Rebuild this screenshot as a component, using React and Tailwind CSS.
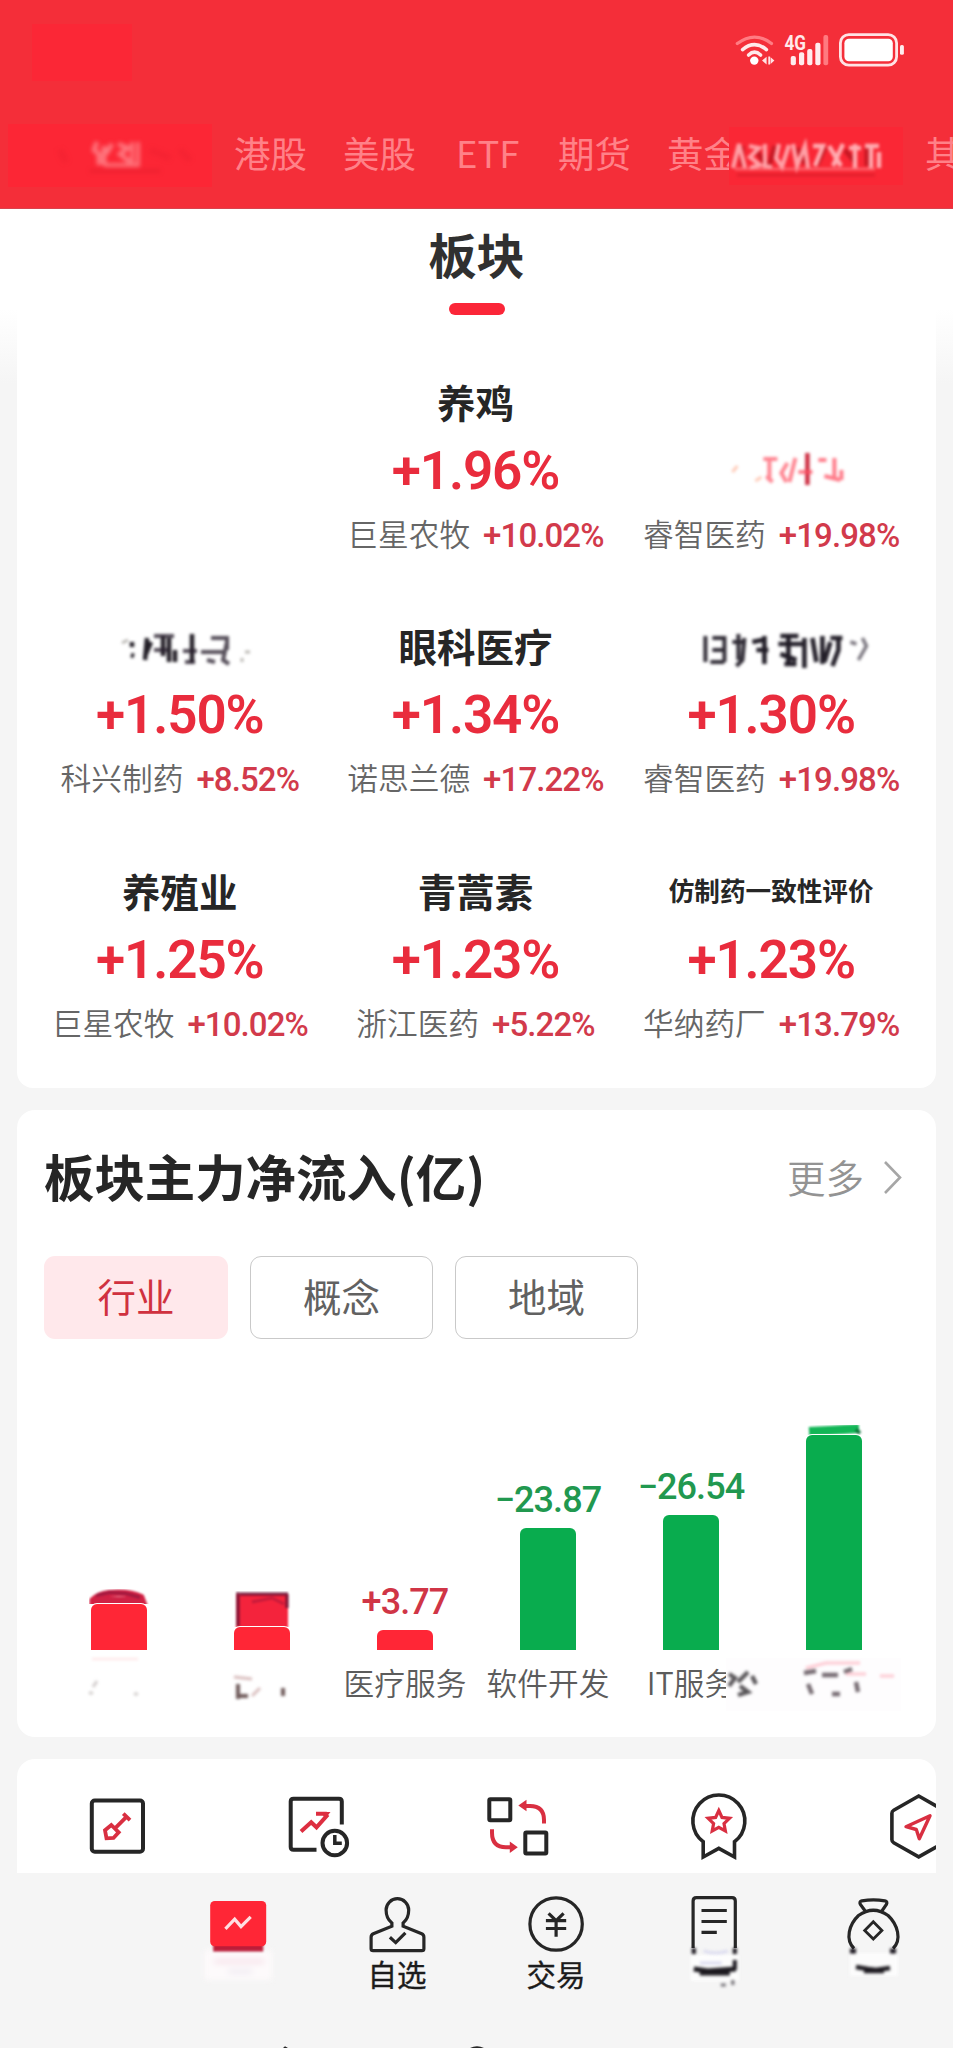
import React from 'react';

const CJK = "font-['Noto_Sans_CJK_SC',sans-serif]";
const NUM = "font-['Roboto','Noto_Sans_CJK_SC',sans-serif]";

/* Soft, unreadable patch: a tinted plate with a few blurred strokes on it. */
function Smudge({ box, plate, strokes = [], soft = 1.2, className = '' }) {
  const [x, y, w, h] = box;
  return (
    <svg width={w} height={h} viewBox={`${x} ${y} ${w} ${h}`} className={`block shrink-0 overflow-hidden ${className}`}>
      {plate && <rect x={x} y={y} width={w} height={h} fill={plate} />}
      <g style={{ filter: `blur(${soft}px)` }} fill="none">
        {strokes.map(([d, color, width, opacity], i) => (
          <path key={i} d={d} stroke={color} strokeWidth={width} opacity={opacity ?? 1} />
        ))}
      </g>
    </svg>
  );
}

function StatusIcons() {
  return (
    <svg width="180" height="44" viewBox="730 28 180 44" className="block" fill="none">
      <g stroke="#fff" strokeWidth="3.6" strokeLinecap="round">
        <path d="M737.3 43.6Q754.5 30.5 771.5 43.6" stroke="#ff7c83" strokeWidth="3.2" />
        <path d="M742.6 49.6Q754.5 39.8 766.4 49.6" stroke="#ffe9ea" />
        <path d="M748.6 55Q754.5 49.4 760.6 55" stroke="#ffe9ea" />
      </g>
      <circle cx="754.3" cy="60.6" r="4.2" fill="#fff" />
      <path d="M762 60.6l4.6-3.8v7.6zM768.3 56.6h1.8v8h-1.8zM774.4 60.6l-3.8-3.4v6.8z" fill="#ffe3e5" />
      <text x="784.4" y="50.2" fontFamily="Roboto" fontWeight="700" fontSize="19.5" textLength="21.5" lengthAdjust="spacingAndGlyphs" fill="#ffe9ea">4G</text>
      <g fill="#ffecee">
        <rect x="790.7" y="56" width="5.2" height="9.2" rx="2" />
        <rect x="799" y="52.3" width="5.2" height="12.9" rx="2" />
        <rect x="807.2" y="49" width="5.2" height="16.2" rx="2" />
        <rect x="815.3" y="42.7" width="5.2" height="22.5" rx="2" />
        <rect x="823.4" y="35" width="4.8" height="30.2" rx="2" fill="#ff7a80" />
      </g>
      <rect x="840.4" y="34.6" width="56.2" height="30.6" rx="8.5" stroke="#ffe3e5" strokeWidth="2.8" />
      <rect x="844.4" y="38.7" width="48.4" height="22.6" rx="4.5" fill="#fff" />
      <rect x="900" y="45" width="3.9" height="9.8" rx="1.6" fill="#ffecee" />
    </svg>
  );
}

function MarketTab({ children, className }) {
  return <span className={`shrink-0 pb-[5px] whitespace-nowrap text-[36.5px] leading-[44px] text-[#ff8188] ${className}`}>{children}</span>;
}

function Header() {
  return (
    <header className="flex h-[209px] flex-col overflow-hidden border-b border-[#d9434e] bg-[#f42e39]">
      <div className="flex h-[124px] items-start justify-between pt-6 pr-[43px] pl-8">
        <div className="h-[57px] w-[100px] bg-[#fb2736]" />
        <div className="pt-1"><StatusIcons /></div>
      </div>
      <div className="flex h-[63px] items-center pl-2">
        <Smudge
          box={[8, 124, 204, 63]}
          plate="#fc2635"
          soft={2.2}
          strokes={[
            ['M97 142l-3 8 5 4v11M104 146v19M112 144l-6 10M118 144l10 4-8 6 10 8', '#ff8d93', 4.5, 0.8],
            ['M132 142v24M138 142v24M104 165h36', '#ff8d93', 4, 0.7],
            ['M60 150l6 12M150 150l20 8M180 150l10 10', '#ef1f2f', 6, 0.5],
            ['M90 171h70', '#e31c2b', 3, 0.6],
          ]}
        />
        <MarketTab className="ml-[22px] w-[73px]">港股</MarketTab>
        <MarketTab className="ml-9 w-[73px]">美股</MarketTab>
        <MarketTab className="ml-10 w-[67px]">ETF</MarketTab>
        <MarketTab className="ml-[35px] w-[73px]">期货</MarketTab>
        <MarketTab className="ml-9 w-[73px]">黄金</MarketTab>
        <Smudge
          box={[730, 125, 174, 58]}
          className="-ml-[11px]"
          plate="#fa2735"
          soft={1.8}
          strokes={[
            ['M743 144v20M757 148l8 12M776 144l-6 20M798 146l8 16M826 145l-8 18M846 148l10 12M868 146v18', '#b9141f', 5, 0.8],
            ['M734 166l6-24 6 24M750 144l10 2-9 9 10 8-10 3M766 142v22l7 1M780 142l-3 14 6 9 7-22M794 142l4 22 8-20 3 22', '#ffa0a6', 4.2, 1],
            ['M814 144l10 0-8 20M830 144l12 20M844 142l-10 22M850 146h12M856 142v24M866 144h14M872 144v22M880 150v16', '#ffacb1', 4.4, 1],
            ['M736 167h140', '#ff8189', 2.5, 0.7],
            ['M738 173h138', '#cf1826', 3, 0.5],
          ]}
        />
        <MarketTab className="ml-[22px] w-[73px]">其他</MarketTab>
      </div>
    </header>
  );
}

const sectors = [
  { lead: null },
  { name: '养鸡', pct: '+1.96%', lead: '巨星农牧', leadPct: '+10.02%' },
  {
    smudgedPct: [
      ['M763 459h14M769 459v22M766 476l6 6M787 463l-6 10 5 9M795 458l-6 24', '#ff5c6c', 4, 0.75],
      ['M807 453v32', '#c8142b', 4.5, 0.9],
      ['M798 472h14M818 460h8M834 458v20M824 476l16 4M841 470v10', '#ff4f62', 4, 0.75],
      ['M732 472l5-6M755 481l6-4', '#ffb59a', 3, 0.7],
    ],
    lead: '睿智医药',
    leadPct: '+19.98%',
  },
  {
    smudgedName: [
      ['M133 640v5M132 653l3 1M148 636l-2 22M152 640l-6 14M164 634v20M170 636v24M176 648v12M193 632v29', '#17131b', 4.5, 0.95],
      ['M155 634h20M155 648h14M184 649h14M186 660h10M202 650h22M212 636h16v12M228 640l-4 18 6 4M208 658l8 2', '#2a2230', 4, 0.8],
      ['M243 656v4M123 641l6-3M246 650h5', '#8e8a84', 3, 0.6],
    ],
    pct: '+1.50%', lead: '科兴制药', leadPct: '+8.52%',
  },
  { name: '眼科医疗', pct: '+1.34%', lead: '诺思兰德', leadPct: '+17.22%' },
  {
    smudgedName: [
      ['M705 634v26M712 636h12v24M712 648h12M710 660h14M738 632v26M744 636l-2 22-6 6M732 640h12', '#1a1520', 4, 0.9],
      ['M752 640l10-2M764 634v28M756 648h12M780 634h18M778 642h24M788 634v28M780 652l16 6M784 662h12', '#15111b', 4.6, 0.95],
      ['M804 636v30M812 636l4 24M822 634v28M830 640l-6 20M838 634v14l-6 16M830 636h12', '#17131d', 4.6, 0.95],
      ['M850 640l6 2M862 636l4 8-8 14', '#4b4652', 3.5, 0.75],
    ],
    pct: '+1.30%', lead: '睿智医药', leadPct: '+19.98%',
  },
  { name: '养殖业', pct: '+1.25%', lead: '巨星农牧', leadPct: '+10.02%' },
  { name: '青蒿素', pct: '+1.23%', lead: '浙江医药', leadPct: '+5.22%' },
  { name: '仿制药一致性评价', compact: true, pct: '+1.23%', lead: '华纳药厂', leadPct: '+13.79%' },
];

function SectorCell({ item, index }) {
  const col = index % 3;
  const left = 33 + col * 295.3;
  return (
    <div className="flex h-[244.6px] flex-col items-center pt-10">
      <div className="flex h-12 items-center justify-center">
        {item.name && (
          <span className={`relative -top-[3px] font-bold leading-none whitespace-nowrap text-[#262626] ${item.compact ? 'text-[25.6px]' : 'text-[38.5px]'}`}>{item.name}</span>
        )}
        {item.smudgedName && <Smudge box={[left, 623, 295, 48]} strokes={item.smudgedName} soft={1.5} />}
      </div>
      <div className="mt-[16px] flex h-[54px] items-center justify-center">
        {item.pct && <span className={`${NUM} text-[53px] leading-none font-semibold tracking-[-1.1px] text-[#e92c3d]`}>{item.pct}</span>}
        {item.smudgedPct && <Smudge box={[left, 444, 295, 54]} strokes={item.smudgedPct} soft={1.8} />}
      </div>
      <div className="mt-[18px] flex h-[38px] items-center justify-center gap-[13px] whitespace-nowrap">
        {item.lead && <span className="relative -top-[2px] text-[30.7px] leading-none font-[350] text-[#666]">{item.lead}</span>}
        {item.leadPct && <span className={`${NUM} text-[33px] leading-none font-medium tracking-[-0.9px] text-[#d23a4b]`}>{item.leadPct}</span>}
      </div>
    </div>
  );
}

function SectorCard() {
  return (
    <section className="mx-[17px] h-[879px] overflow-hidden rounded-b-2xl bg-white">
      <div className="flex h-[131px] flex-col items-center pt-[18px]">
        <h1 className="text-[48px] leading-[52px] font-bold text-[#303030]">板块</h1>
        <div className="mt-[24px] h-3 w-[56px] rounded-full bg-[#fb2638]" />
      </div>
      <div className="grid grid-cols-3 pr-[17px] pl-[15px]">
        {sectors.map((item, i) => <SectorCell key={i} item={item} index={i} />)}
      </div>
    </section>
  );
}

const bars = [
  {
    height: 46, up: true, capHeight: 15,
    cap: [['M93 1600q6-6 16-7q20-2 32 4l3 8H93z', '#d31f42', 7, 1], ['M95 1600h48', '#cf2144', 7, 1], ['M96 1595l14-3 16 1 14 4', '#7e1740', 3, 0.6]],
    smear: [['M97 1677l-4 6M89 1689h4M134 1690h4', '#a39a98', 3, 0.5], ['M92 1655h46', '#ffd9dc', 2, 0.7]],
  },
  {
    height: 22.5, up: true, capHeight: 36,
    cap: [['M236 1611H288', '#f4233c', 34, 1], ['M238 1592v34M240 1594h48M287 1594v14', '#6d1234', 3.5, 0.8], ['M252 1602l20-4 12 6', '#b3183a', 3, 0.7]],
    smear: [['M238 1680v15M240 1692h8M283 1684v8', '#4a2f30', 4, 0.8], ['M252 1692l8-8M234 1673l18 2', '#c9a3a3', 3, 0.7]],
  },
  { height: 19.5, up: true, value: '+3.77', label: '医疗服务' },
  { height: 121.5, up: false, value: '−23.87', label: '软件开发' },
  { height: 135, up: false, value: '−26.54', label: 'IT服务' },
  {
    height: 215, up: false, capHeight: 10,
    cap: [['M809 1431l20-1 30-2', '#12b656', 9, 1], ['M856 1429l4 4', '#0b6b35', 4, 0.8]],
  },
];

function Bar({ bar, index }) {
  const center = 119 + index * 143;
  const top = 1649.5 - bar.height;
  return (
    <div className="flex h-[330px] w-[143px] flex-col items-center justify-end">
      {bar.value && (
        <span className={`${NUM} mb-[9px] text-[36px] leading-[38px] font-medium tracking-[-0.9px] whitespace-nowrap ${bar.up ? 'text-[#d03546]' : 'text-[#21984f]'}`}>
          {bar.value}
        </span>
      )}
      {bar.cap && <Smudge box={[center - 30, top - bar.capHeight, 60, bar.capHeight]} strokes={bar.cap} soft={1.2} />}
      <div
        className={`w-[56px] rounded-t-[6px] ring-1 ring-white ${bar.up ? 'bg-[#ff2636]' : 'bg-[#09ac4e]'}`}
        style={{ height: bar.height }}
      />
      <div className="flex h-[68px] w-full items-center justify-center pt-[2px]">
        {bar.label && <span className="relative -top-[2px] text-[30.7px] leading-none font-[350] whitespace-nowrap text-[#5c5c5c]">{bar.label}</span>}
        {bar.smear && <Smudge box={[center - 45, 1651, 90, 60]} strokes={bar.smear} soft={1.6} />}
      </div>
    </div>
  );
}

function FlowCard() {
  return (
    <section className="mx-[17px] mt-[22px] h-[627px] rounded-[18px] bg-white">
      <div className="flex h-[136px] items-center justify-between pr-[33px] pl-[27px]">
        <h2 className="pb-[3px] text-[50.4px] leading-none font-bold whitespace-nowrap text-[#262626]">板块主力净流入(亿)</h2>
        <div className="flex items-center gap-[19px]">
          <span className="pb-[3px] text-[38.5px] leading-none font-[350] text-[#939393]">更多</span>
          <svg width="20" height="36" viewBox="0 0 20 36" fill="none" stroke="#a6a6a6" strokeWidth="2.6"><path d="M2 2l15 15.500L2 33" /></svg>
        </div>
      </div>
      <div className="mt-[10px] flex gap-[22px] pl-[27px]">
        <button className="h-[83px] w-[184px] rounded-[11px] bg-[#ffe8eb] pb-[5px] text-[38.5px] leading-none text-[#d0313f]">行业</button>
        <button className="h-[83px] w-[183px] rounded-[11px] border border-[#c9c9c9] pb-[5px] text-[38.5px] leading-none text-[#616161]">概念</button>
        <button className="h-[83px] w-[183px] rounded-[11px] border border-[#c9c9c9] pb-[5px] text-[38.5px] leading-none text-[#616161]">地域</button>
      </div>
      <div className="relative mt-[48.500px] flex pl-[30.500px]">
        {bars.map((bar, i) => <Bar key={i} bar={bar} index={i} />)}
        {/* soft patch lying over the end of the last two labels */}
        <Smudge
          box={[726, 1658, 175, 53]}
          className="absolute right-[35px] bottom-[7px]"
          plate="#fefdfe"
          soft={1.8}
          strokes={[
            ['M729 1674l6 4-6 8M738 1682l10-10M740 1686l8 6-10 3M752 1676l4 8', '#2e2a2e', 4.2, 0.8],
            ['M804 1673l12-2M822 1675h16M844 1672l8-3M808 1684l4 10M856 1682l2 10M832 1694h8', '#3a2c34', 4.4, 0.7],
            ['M806 1668l20-5 34 0M846 1674h20M880 1676h14', '#ffb3c0', 3, 0.7],
          ]}
        />
      </div>
    </section>
  );
}

function ToolIcon({ x, children }) {
  return (
    <svg width="200.500" height="114" viewBox={`${x} 1759 200.500 114`} className="block shrink-0" fill="none" stroke="#262626" strokeWidth="4">
      {children}
    </svg>
  );
}

function ToolsCard() {
  return (
    <section className="mx-[17px] mt-[22px] flex h-[114px] overflow-hidden rounded-t-[18px] bg-white">
      <ToolIcon x={17}>
        <rect x="91.800" y="1800.600" width="51.200" height="51.200" rx="3" />
        <path d="M105 1830.300l6.300-5.300 7.400 7.300-5.200 5.700-7 .3zM115 1828.300l11.700-11.600M123.300 1813.600l6.700 6.600" stroke="#d92f41" strokeWidth="3.800" />
      </ToolIcon>
      <ToolIcon x={217.500}>
        <path d="M341.300 1824.500V1801.500q0-2.800-2.800-2.800H293q-2.800 0-2.800 2.800V1847q0 2.800 2.800 2.800H316" />
        <path d="M300.500 1831.500l10.200-9.200 5.300 5 11.300-12.600M315.500 1813.700h10.800" stroke="#dd2e40" strokeWidth="4" />
        <path d="M321 1812h9l-5.500 7z" fill="#dd2e40" stroke="none" />
        <circle cx="334.300" cy="1843" r="12.300" />
        <path d="M334.300 1835v8.300h7" strokeWidth="3.500" />
      </ToolIcon>
      <ToolIcon x={418}>
        <rect x="489.300" y="1799.200" width="21" height="21" rx="1" />
        <rect x="525.300" y="1832.400" width="21" height="21" rx="1" />
        <path d="M544 1823.500v-3.500q0-14-14-14h-4M492 1829.300v3.500q0 14.500 14 14.500h4" stroke="#d92f41" />
        <path d="M518.300 1805.500l8.200-5.700v11.400zM517.800 1847.300l-8-5.900v11.700z" fill="#d92f41" stroke="none" />
      </ToolIcon>
      <ToolIcon x={618.500}>
        <path d="M702.700 1841.700A26 26 0 1 1 734 1841.700V1857l-15.700-8.600-15.600 8.600z" strokeWidth="3.600" />
        <path d="M718.300 1810.500l3.200 6.900 7.500.9-5.500 5.200 1.400 7.500-6.600-3.700-6.600 3.700 1.400-7.500-5.500-5.200 7.500-.9z" stroke="#d92f41" strokeWidth="3.200" />
      </ToolIcon>
      <ToolIcon x={819}>
        <path d="M918.700 1796l25 14.200q1.800 1 1.800 3v26.500q0 2-1.800 3l-25 14.200-25-14.200q-1.800-1-1.800-3v-26.500q0-2 1.800-3z" strokeWidth="3.600" />
        <path d="M906 1826.700l24-11-10.700 23-3-9.200z" stroke="#d92f41" strokeWidth="3.400" strokeLinejoin="round" />
      </ToolIcon>
    </section>
  );
}

function NavItem({ x, tall, label, children }) {
  const h = tall ? 130 : 81;
  return (
    <div className="flex flex-1 flex-col items-center">
      <svg width="158.800" height={h} viewBox={`${x} 1873 158.800 ${h}`} className="block" fill="none" stroke="#262626" strokeWidth="3.200">
        {children}
      </svg>
      {label && <span className="mt-[4px] text-[29.500px] leading-[30px] font-normal text-[#1c1c1c] [-webkit-text-stroke:0.35px_#1c1c1c]">{label}</span>}
    </div>
  );
}

function BottomNav() {
  return (
    <nav className="flex h-[172px] bg-[#f5f5f5]">
      <NavItem x={0}>{null}</NavItem>
      <NavItem x={158.8} tall>
        <g style={{ filter: 'blur(3px)' }} stroke="none">
          <rect x="204" y="1950" width="68" height="30" fill="#fdfafb" />
          <path d="M214 1960h50v3h-50z" fill="#f3d7e2" />
          <path d="M228 1970h24v3h-24z" fill="#e9e3ed" />
        </g>
        <rect x="213" y="1944" width="50" height="7.500" fill="#bb1d39" stroke="none" style={{ filter: 'blur(1px)' }} />
        <rect x="210" y="1901" width="56" height="45.300" rx="4.500" fill="#ff2636" stroke="none" />
        <path d="M225.200 1928.800l9.300-9.600 6.300 7.400 9.700-9.800" stroke="#ffdfe2" strokeWidth="3.200" />
      </NavItem>
      <NavItem x={317.6} label="自选">
        <path d="M391.500 1926.200V1923C387 1919.500 385.700 1914.500 385.700 1910a11.300 11.300 0 0 1 22.600 0C408.300 1914.500 407 1919.500 402.700 1923V1926.200L421.300 1933.800q2.200 1 2.200 3.400V1948.700q0 2-2 2H372.700q-2 0-2-2V1937.200q0-2.400 2.200-3.400z" />
        <path d="M389.500 1937.300l5.800 5.300 9.700-9.800" />
      </NavItem>
      <NavItem x={476.4} label="交易">
        <circle cx="555.500" cy="1924" r="26.200" />
        <path d="M548 1913.300l7.500 7.400 7.500-7.400M555.500 1920v16.700M545.300 1920.700h20.300M545.300 1928.500h20.300" />
      </NavItem>
      <NavItem x={635.2} tall>
        <path d="M693.300 1948V1901q0-3.300 3.300-3.300h35.600q3.300 0 3.300 3.300V1948M701.700 1910.500h25.300M701.700 1921.500h25.300M701.700 1932.400h15.300" />
        <g style={{ filter: 'blur(1.500px)' }}>
          <path d="M691 1955h48v26h-48z" fill="#fdfdfd" stroke="none" />
          <path d="M694 1948v6M735 1948v6M735 1960v10" stroke="#17131b" strokeWidth="4" />
          <path d="M704 1951q12 4 24 0M700 1963h22" stroke="#dcdcf0" />
          <path d="M694 1969l14 2 14-1 14-1M700 1973h30" stroke="#1d1a20" strokeWidth="5" />
          <path d="M721 1985h5M733 1980v5" stroke="#77747a" />
        </g>
      </NavItem>
      <NavItem x={794} tall>
        <path d="M865.200 1911l-4.800-6.500q-1.500-3 1.500-3.700 11.500-1.800 23 0 3 .7 1.500 3.700l-4.500 6.500M854 1948.500c-9-9-5-24 4.500-33q14.800-10.500 29.600 0c9.500 9 14 24 5 33" />
        <path d="M873.300 1921.800l8.600 8.600-8.600 8.600-8.600-8.600z" strokeWidth="2.800" />
        <g style={{ filter: 'blur(1.600px)' }}>
          <path d="M850 1953h48v23h-48z" fill="#fcfcfc" stroke="none" />
          <path d="M850 1951h6M890 1951h6" stroke="#17131b" strokeWidth="5" />
          <path d="M856 1967l12 2 8 1 14-2M864 1971h20" stroke="#1d1a20" strokeWidth="4.500" />
        </g>
      </NavItem>
    </nav>
  );
}

export default function App() {
  return (
    <div className={`${CJK} h-[2048px] w-[953px] overflow-hidden bg-[#f5f5f5]`}>
      <Header />
      <main className="bg-[linear-gradient(180deg,#fff_0px,#fff_100px,#f5f5f5_175px)]">
        <SectorCard />
        <FlowCard />
        <ToolsCard />
      </main>
      <BottomNav />
      <svg width="953" height="3" viewBox="0 0 953 3" className="block" fill="#262626">
        <path d="M283 3l2-1.800 3 1.800zM470 3q7-3.600 14 0z" />
      </svg>
    </div>
  );
}
